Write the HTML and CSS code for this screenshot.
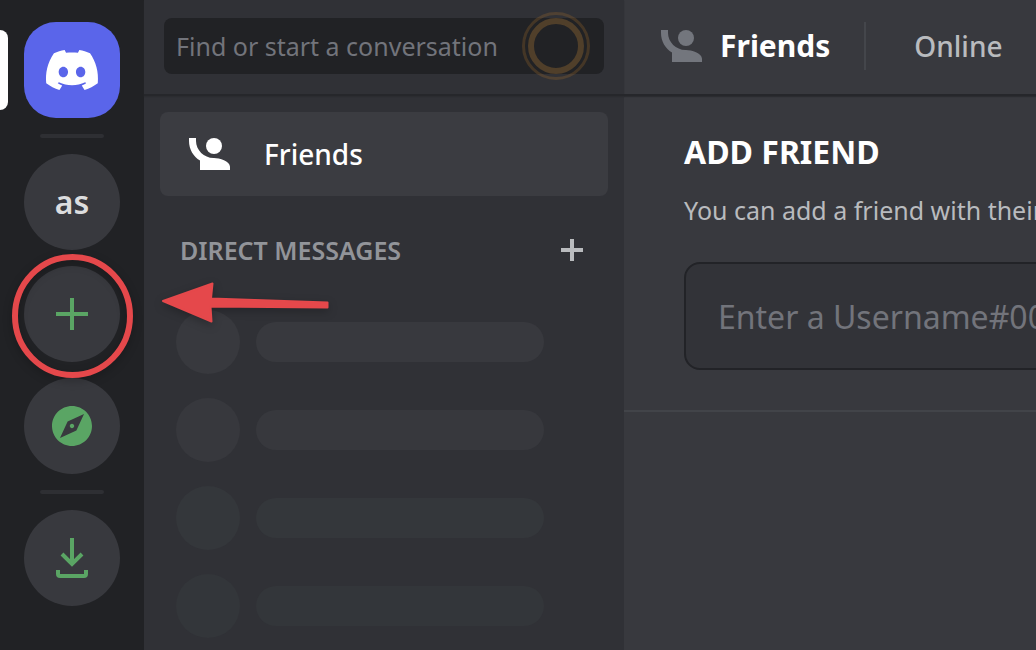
FILE: index.html
```html
<!DOCTYPE html>
<html lang="en">
<head>
<meta charset="utf-8">
<meta name="viewport" content="width=device-width, initial-scale=1">
<title>Friends</title>
<link rel="stylesheet" href="styles.css">
</head>
<body>
<div class="app">
  <nav class="rail" aria-label="Servers">
    <span class="rail-marker"></span>
    <button class="server server-home" aria-label="Home">
      <svg width="56" height="40" viewBox="0 0 28 20" fill="currentColor" aria-hidden="true"><path d="M23.0212 1.67671C21.3107 0.879656 19.5079 0.318797 17.6584 0C17.4062 0.461742 17.1749 0.934541 16.9708 1.4184C15.003 1.12145 12.9974 1.12145 11.0283 1.4184C10.819 0.934541 10.589 0.461744 10.3368 0.00546311C8.48074 0.324393 6.67795 0.885118 4.96746 1.68231C1.56727 6.77853 0.649666 11.7538 1.11108 16.652C3.10102 18.1418 5.3262 19.2743 7.69177 20C8.22338 19.2743 8.69519 18.4993 9.09812 17.691C8.32996 17.3997 7.58522 17.0424 6.87684 16.6135C7.06531 16.4762 7.24726 16.3387 7.42403 16.1847C11.5911 18.1749 16.408 18.1749 20.5763 16.1847C20.7531 16.3332 20.9351 16.4762 21.1171 16.6135C20.41 17.0369 19.6639 17.3997 18.897 17.691C19.3052 18.4993 19.7718 19.2689 20.3021 19.9945C22.6677 19.2689 24.8929 18.1364 26.8828 16.6466H26.8893C27.43 10.9731 25.9665 6.04728 23.0212 1.67671ZM9.68041 13.6383C8.39754 13.6383 7.34085 12.4453 7.34085 10.994C7.34085 9.54272 8.37155 8.34973 9.68041 8.34973C10.9893 8.34973 12.0395 9.54272 12.0187 10.994C12.0187 12.4453 10.9828 13.6383 9.68041 13.6383ZM18.3161 13.6383C17.0333 13.6383 15.9765 12.4453 15.9765 10.994C15.9765 9.54272 17.0124 8.34973 18.3161 8.34973C19.6184 8.34973 20.6751 9.54272 20.6543 10.994C20.6543 12.4453 19.6184 13.6383 18.3161 13.6383Z"/></svg>
    </button>
    <span class="rail-separator"></span>
    <button class="server">as</button>
    <button class="server server-action" aria-label="Add a server">
      <svg width="48" height="48" viewBox="0 0 24 24" fill="currentColor" aria-hidden="true"><path d="M20 11H13V4H11V11H4V13H11V20H13V13H20V11Z"/></svg>
    </button>
    <button class="server server-action" aria-label="Explore servers">
      <svg width="48" height="48" viewBox="0 0 24 24" fill="currentColor" aria-hidden="true"><path d="M12 10.9C11.39 10.9 10.9 11.39 10.9 12C10.9 12.61 11.39 13.1 12 13.1C12.61 13.1 13.1 12.61 13.1 12C13.1 11.39 12.61 10.9 12 10.9ZM12 2C6.48 2 2 6.48 2 12C2 17.52 6.48 22 12 22C17.52 22 22 17.52 22 12C22 6.48 17.52 2 12 2ZM14.19 14.19L6 18L9.81 9.81L18 6L14.19 14.19Z"/></svg>
    </button>
    <span class="rail-separator"></span>
    <button class="server server-action" aria-label="Download apps">
      <svg width="48" height="48" viewBox="0 0 48 48" fill="none" stroke="currentColor" stroke-width="4" aria-hidden="true"><path d="M24 4V30M14 20L24 30L34 20M10 36V40Q10 42 12 42H36Q38 42 38 40V36"/></svg>
    </button>
  </nav>

  <aside class="sidebar">
    <div class="sidebar-head">
      <input class="search" type="text" placeholder="Find or start a conversation" aria-label="Find or start a conversation">
      <svg class="pulse" width="68" height="68" viewBox="0 0 68 68" fill="none" aria-hidden="true"><circle cx="34" cy="34" r="32.500" stroke="#a06c2a" stroke-opacity=".28" stroke-width="3"/><circle cx="34" cy="34" r="25" stroke="#503f2a" stroke-width="6"/></svg>
    </div>
    <div class="sidebar-body">
      <a class="nav-item" href="#friends">
        <svg width="48" height="48" viewBox="0 0 24 24" fill="currentColor" aria-hidden="true"><path d="M2.5 4V5.5C2.5 9.65 4.71 13.28 8 15.3V20H23V18.34C23 15.67 17.67 14 15 14H14.75C10 14 6 10 6 5.5V4Z"/><circle cx="15" cy="8" r="4"/></svg>
        <span>Friends</span>
      </a>
      <div class="dm-head">
        <h2>DIRECT MESSAGES</h2>
        <button class="dm-add" aria-label="Create DM">
          <svg width="24" height="24" viewBox="0 0 24 24" stroke="currentColor" stroke-width="4" aria-hidden="true"><path d="M12 1V23M1 12H23"/></svg>
        </button>
      </div>
      <div class="dm-list">
        <div class="dm-row"><span class="dm-avatar"></span><span class="dm-bar"></span></div>
        <div class="dm-row"><span class="dm-avatar"></span><span class="dm-bar"></span></div>
        <div class="dm-row"><span class="dm-avatar"></span><span class="dm-bar"></span></div>
        <div class="dm-row"><span class="dm-avatar"></span><span class="dm-bar"></span></div>
      </div>
    </div>
  </aside>

  <main class="content">
    <header class="content-head">
      <svg class="head-icon" width="48" height="48" viewBox="0 0 24 24" fill="currentColor" aria-hidden="true"><path d="M2.5 4V5.5C2.5 9.65 4.71 13.28 8 15.3V20H23V18.34C23 15.67 17.67 14 15 14H14.75C10 14 6 10 6 5.5V4Z"/><circle cx="15" cy="8" r="4"/></svg>
      <h1>Friends</h1>
      <span class="head-divider"></span>
      <button class="tab">Online</button>
    </header>
    <section class="add-friend">
      <h2>ADD FRIEND</h2>
      <label for="username">You can add a friend with their</label>
      <input id="username" type="text" placeholder="Enter a Username#0000">
    </section>
  </main>

  <svg class="annotation" width="340" height="140" viewBox="0 0 340 140" aria-hidden="true">
    <ellipse cx="72.500" cy="66" rx="57.500" ry="59" fill="none" stroke="#e5484b" stroke-width="6"/>
    <path d="M163 51L212.500 33.500L211 48.500L327.500 52.500V57.500L210.500 56.500L211.500 71.500Z" fill="#e5484b" stroke="#e5484b" stroke-width="2" stroke-linejoin="round"/>
  </svg>
</div>
</body>
</html>
```
FILE: styles.css
```css
* {
  box-sizing: border-box;
}

body {
  margin: 0;
  background: #38393e;
  color: #fff;
  font-family: "Noto Sans", "Open Sans", sans-serif;
  font-size: 25px;
  line-height: 36px;
}

h1,
h2 {
  margin: 0;
}

button,
input {
  margin: 0;
  padding: 0;
  border: 0;
  background: none;
  color: inherit;
  font: inherit;
}

svg {
  display: block;
  flex: none;
}

.app {
  position: relative;
  display: flex;
  height: 100vh;
  overflow: hidden;
}

.rail {
  position: relative;
  flex: none;
  display: flex;
  flex-direction: column;
  align-items: center;
  gap: 16px;
  width: 144px;
  padding-top: 22px;
  background: #212225;
}

.rail-marker {
  position: absolute;
  top: 30px;
  left: 0;
  width: 8px;
  height: 80px;
  border-radius: 0 8px 8px 0;
  background: #fff;
}

.rail-separator {
  flex: none;
  width: 64px;
  height: 4px;
  border-radius: 2px;
  background: #2e2f33;
}

.server {
  flex: none;
  display: flex;
  align-items: center;
  justify-content: center;
  width: 96px;
  height: 96px;
  border-radius: 50%;
  background: #38393e;
  color: #dcddde;
  font-size: 32px;
  font-weight: 600;
}

.server-home {
  border-radius: 32px;
  background: #5a65ea;
  color: #fff;
}

.server-action {
  color: #5aa564;
}

.sidebar {
  flex: none;
  display: flex;
  flex-direction: column;
  width: 480px;
  background: #303136;
}

.sidebar-head,
.content-head {
  flex: none;
  display: flex;
  align-items: center;
  height: 96px;
  border-bottom: 2px solid #26272b;
  box-shadow: 0 1px 1px #2b2c30;
}

.sidebar-head {
  position: relative;
  padding: 0 20px 2px;
}

.search {
  width: 100%;
  height: 56px;
  padding: 0 12px;
  border-radius: 8px;
  background: #212225;
}

.search::placeholder {
  color: #72747b;
  opacity: 1;
}

.pulse {
  position: absolute;
  top: 12px;
  right: 34px;
}

.sidebar-body {
  padding: 16px;
}

.nav-item {
  display: flex;
  align-items: center;
  gap: 32px;
  height: 84px;
  padding: 0 24px;
  border-radius: 8px;
  background: #3b3c41;
  color: #fff;
  font-size: 28px;
  font-weight: 500;
  text-decoration: none;
}

.dm-head {
  display: flex;
  align-items: center;
  justify-content: space-between;
  padding: 36px 24px 0 20px;
  color: #929499;
}

.dm-head h2 {
  font-size: 25px;
  font-weight: 600;
}

.dm-add {
  color: #b9bbbe;
}

.dm-list {
  display: grid;
  gap: 24px;
  padding: 42px 64px 0 16px;
}

.dm-row {
  display: flex;
  align-items: center;
  gap: 16px;
}

.dm-avatar {
  flex: none;
  width: 64px;
  height: 64px;
  border-radius: 50%;
  background: #38393e;
}

.dm-bar {
  flex: 1;
  height: 40px;
  border-radius: 20px;
  background: #38393e;
}

.dm-row:nth-child(2) span {
  background: #37383d;
}

.dm-row:nth-child(3) span {
  background: #34373b;
}

.dm-row:nth-child(4) span {
  background: #33363a;
}

.content {
  flex: 1;
  min-width: 0;
  overflow: hidden;
  white-space: nowrap;
}

.content-head {
  padding: 0 32px 2px;
}

.head-icon {
  color: #73767d;
}

.content-head h1 {
  margin-left: 16px;
  font-size: 30px;
  font-weight: 700;
}

.head-divider {
  flex: none;
  width: 2px;
  height: 48px;
  margin: 0 48px 0 34px;
  background: #44464b;
}

.tab {
  color: #b9bbbe;
  font-size: 28px;
  font-weight: 500;
}

.add-friend {
  display: flex;
  flex-direction: column;
  padding: 38px 0 40px 60px;
  border-bottom: 2px solid #424449;
}

.add-friend h2 {
  font-size: 32px;
  font-weight: 700;
}

.add-friend label {
  margin-top: 22px;
  color: #b9bbbe;
}

.add-friend input {
  width: 150%;
  height: 108px;
  margin-top: 34px;
  padding: 0 32px;
  border: 2px solid #222327;
  border-radius: 16px;
  background: #323338;
  font-size: 32px;
}

.add-friend input::placeholder {
  color: #72747b;
  opacity: 1;
}

.annotation {
  position: absolute;
  top: 250px;
  left: 0;
  filter: drop-shadow(0 3px 4px rgba(0, 0, 0, .25));
  pointer-events: none;
}
```
